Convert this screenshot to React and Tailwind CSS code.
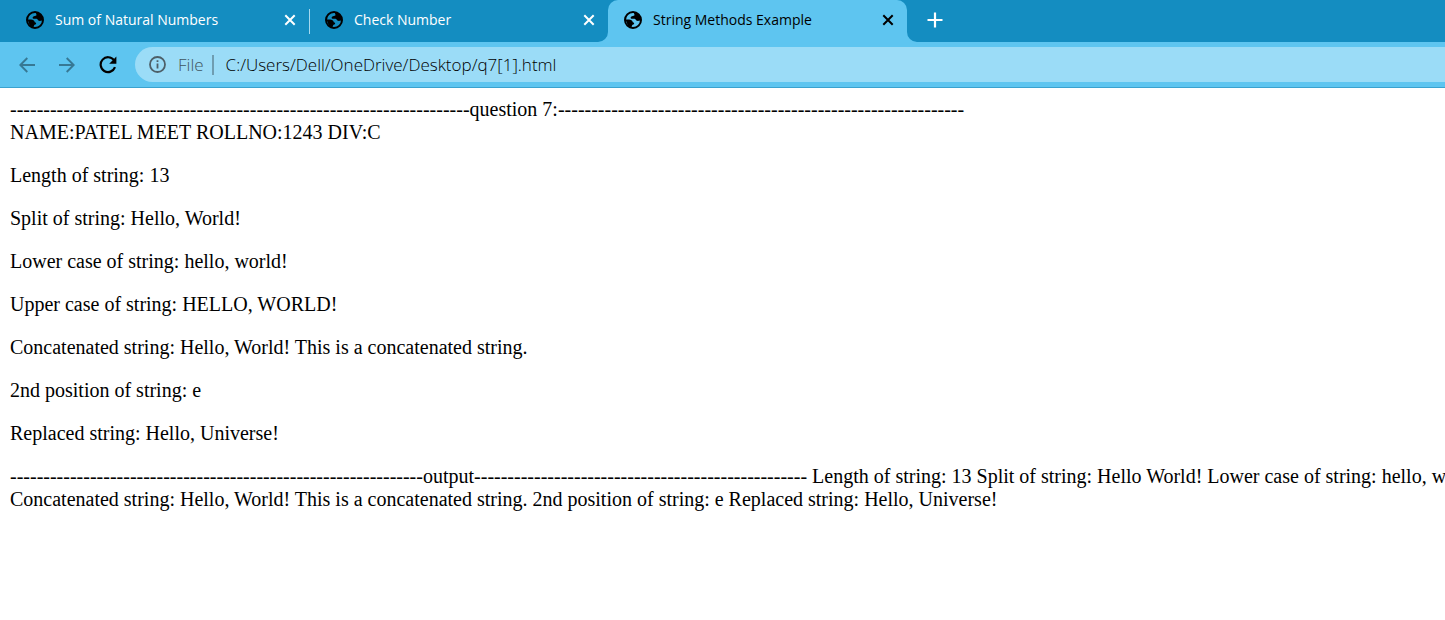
import React from "react";

const d = (n) => "-".repeat(n);

function Globe() {
  return (
    <svg className="size-[18px] shrink-0" viewBox="0 0 18 18" fill="none" aria-hidden="true">
      <circle cx="9" cy="9" r="8" stroke="#000" strokeWidth="2" />
      <path d="M10.4 1.5C9.8 2.4 10 3.2 10.6 3.8C10.4 5 9.2 5 8 5.2C6.4 5.5 6.2 7.2 7.4 7.8H10.4C11.8 8 11.8 9.3 12.8 9.8C14.2 10.2 15.4 9.4 16.6 9.6L17 7L14.5 3Z" fill="#000" />
      <path d="M1.5 8.6H5C7 8.6 8.4 9.6 8.8 11.2C10 11.5 10.4 12.4 10 13.3C8.4 13.6 7.6 14.6 7.6 16.6L4 15Z" fill="#000" />
    </svg>
  );
}

function Close() {
  return (
    <svg className="size-3" viewBox="0 0 12 12" stroke="currentColor" strokeWidth="2" aria-hidden="true">
      <path d="M1.3 1.3l9.4 9.4M10.7 1.3l-9.4 9.4" />
    </svg>
  );
}

function Tab({ title, active }) {
  return (
    <div
      role="tab"
      aria-selected={!!active}
      className={
        "relative flex h-[42px] w-[299px] shrink-0 items-center pr-[13px] pb-0.5 pl-4 " +
        (active ? "rounded-t-[10px] bg-[#5ec5f0] text-black" : "text-white")
      }
    >
      <Globe />
      <span className="ml-[11px] flex-1 truncate text-[14px] leading-5">{title}</span>
      <button type="button" aria-label={"Close " + title} className="flex">
        <Close />
      </button>
      {active && (
        <>
          <svg className="absolute bottom-0 -left-2.5 size-2.5" viewBox="0 0 10 10" fill="#5ec5f0" aria-hidden="true">
            <path d="M10 0V10H0A10 10 0 0 0 10 0Z" />
          </svg>
          <svg className="absolute -right-2.5 bottom-0 size-2.5" viewBox="0 0 10 10" fill="#5ec5f0" aria-hidden="true">
            <path d="M0 0V10H10A10 10 0 0 1 0 0Z" />
          </svg>
        </>
      )}
    </div>
  );
}

function Arrow({ back }) {
  return (
    <svg className="size-4" viewBox="0 0 16 16" fill="none" stroke="#377894" strokeWidth="1.9" aria-hidden="true">
      {back ? <path d="M16 8H1.5M8.3 1L1.3 8l7 7" /> : <path d="M0 8H14.5M7.7 1l7 7l-7 7" />}
    </svg>
  );
}

export default function App() {
  return (
    <div className="min-h-screen overflow-hidden bg-white">
      <header className="font-['Open_Sans','Noto_Sans',sans-serif]">
        <div role="tablist" className="flex items-center bg-[#148dc1] pl-2.5">
          <Tab title="Sum of Natural Numbers" />
          <span className="-mr-px h-[25px] w-px bg-[#a5d9ef]" />
          <Tab title="Check Number" />
          <Tab title="String Methods Example" active />
          <button type="button" aria-label="New tab" className="ml-5 flex pb-0.5 text-white">
            <svg className="size-4" viewBox="0 0 16 16" stroke="currentColor" strokeWidth="2.2" aria-hidden="true">
              <path d="M8 .5v15M.5 8h15" />
            </svg>
          </button>
        </div>
        <div className="flex h-[46px] items-center border-b border-[#3aa2cf] bg-[#5ec5f0] pl-[19px]">
          <button type="button" aria-label="Back"><Arrow back /></button>
          <button type="button" aria-label="Forward" className="ml-6"><Arrow /></button>
          <button type="button" aria-label="Reload" className="ml-6">
            <svg className="size-[18px]" viewBox="0 0 18 18" fill="none" aria-hidden="true">
              <path d="M15 4.2A7.4 7.4 0 1 0 16 11.2" stroke="#000" strokeWidth="2.2" />
              <path d="M17.4 .6V7.8H10.2Z" fill="#000" />
            </svg>
          </button>
          <div className="ml-[18px] flex h-[35px] flex-1 items-center rounded-l-full bg-[#9bdcf7] pl-3.5 text-[17px] leading-6 font-light">
            <svg className="size-[17px] shrink-0" viewBox="0 0 17 17" fill="none" stroke="#4d5f68" strokeWidth="1.8" aria-hidden="true">
              <circle cx="8.5" cy="8.5" r="7.5" />
              <path d="M8.5 7.5v5M8.5 4.3v1.8" />
            </svg>
            <span className="ml-3 text-[#3f545e]">File</span>
            <span className="ml-2 h-5 w-0.5 bg-[#6f9db1]" />
            <input
              aria-label="Address"
              defaultValue="C:/Users/Dell/OneDrive/Desktop/q7[1].html"
              className="ml-3 min-w-0 flex-1 bg-transparent text-black outline-none"
            />
          </div>
        </div>
      </header>
      <main className="flex flex-col gap-5 p-2.5 font-['Liberation_Serif',serif] text-[20px] leading-[23px] whitespace-nowrap text-black">
        <div>
          {d(69)}question 7:{d(61)}
          <br />
          NAME:PATEL MEET ROLLNO:1243 DIV:C
        </div>
        <p>Length of string: 13</p>
        <p>Split of string: Hello, World!</p>
        <p>Lower case of string: hello, world!</p>
        <p>Upper case of string: HELLO, WORLD!</p>
        <p>Concatenated string: Hello, World! This is a concatenated string.</p>
        <p>2nd position of string: e</p>
        <p>Replaced string: Hello, Universe!</p>
        <div>
          {d(62)}output{d(50)} Length of string: 13 Split of string: Hello World! Lower case of string: hello, world!
          <br />
          Concatenated string: Hello, World! This is a concatenated string. 2nd position of string: e Replaced string: Hello, Universe!
        </div>
      </main>
    </div>
  );
}
